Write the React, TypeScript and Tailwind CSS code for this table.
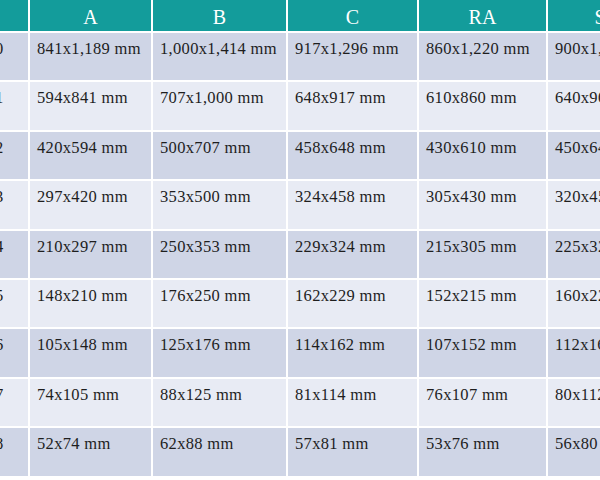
const columns = ['', 'A', 'B', 'C', 'RA', 'S'];

const rows = [
  ['0', '841x1,189 mm', '1,000x1,414 mm', '917x1,296 mm', '860x1,220 mm', '900x1,280 mm'],
  ['1', '594x841 mm', '707x1,000 mm', '648x917 mm', '610x860 mm', '640x900 mm'],
  ['2', '420x594 mm', '500x707 mm', '458x648 mm', '430x610 mm', '450x640 mm'],
  ['3', '297x420 mm', '353x500 mm', '324x458 mm', '305x430 mm', '320x450 mm'],
  ['4', '210x297 mm', '250x353 mm', '229x324 mm', '215x305 mm', '225x320 mm'],
  ['5', '148x210 mm', '176x250 mm', '162x229 mm', '152x215 mm', '160x225 mm'],
  ['6', '105x148 mm', '125x176 mm', '114x162 mm', '107x152 mm', '112x160 mm'],
  ['7', '74x105 mm', '88x125 mm', '81x114 mm', '76x107 mm', '80x112 mm'],
  ['8', '52x74 mm', '62x88 mm', '57x81 mm', '53x76 mm', '56x80 mm']
];

export default function App() {
  return (
    <div className="h-[480px] w-[600px] overflow-hidden bg-white font-['Liberation_Serif',serif]">
      <div className="-ml-[12px] grid w-[680px] grid-cols-[40px_121px_133px_129px_127px_104px] gap-[2px] bg-white">
        {columns.map((c, i) => (
          <div
            key={'h' + i}
            className="flex h-[31px] items-center justify-center bg-[#139c9b] pt-[3px] text-[20px] text-white"
          >
            {c}
          </div>
        ))}
        {rows.map((row, r) =>
          row.map((cell, i) => (
            <div
              key={r + '-' + i}
              className={
                'h-[47.4px] whitespace-nowrap pl-[7px] pt-[5px] text-[16.5px] leading-[22px] tracking-[0.02em] text-[#1e1e1e] ' +
                (r % 2 === 0 ? 'bg-[#cfd5e6]' : 'bg-[#e8ebf4]')
              }
            >
              {cell}
            </div>
          ))
        )}
      </div>
    </div>
  );
}
